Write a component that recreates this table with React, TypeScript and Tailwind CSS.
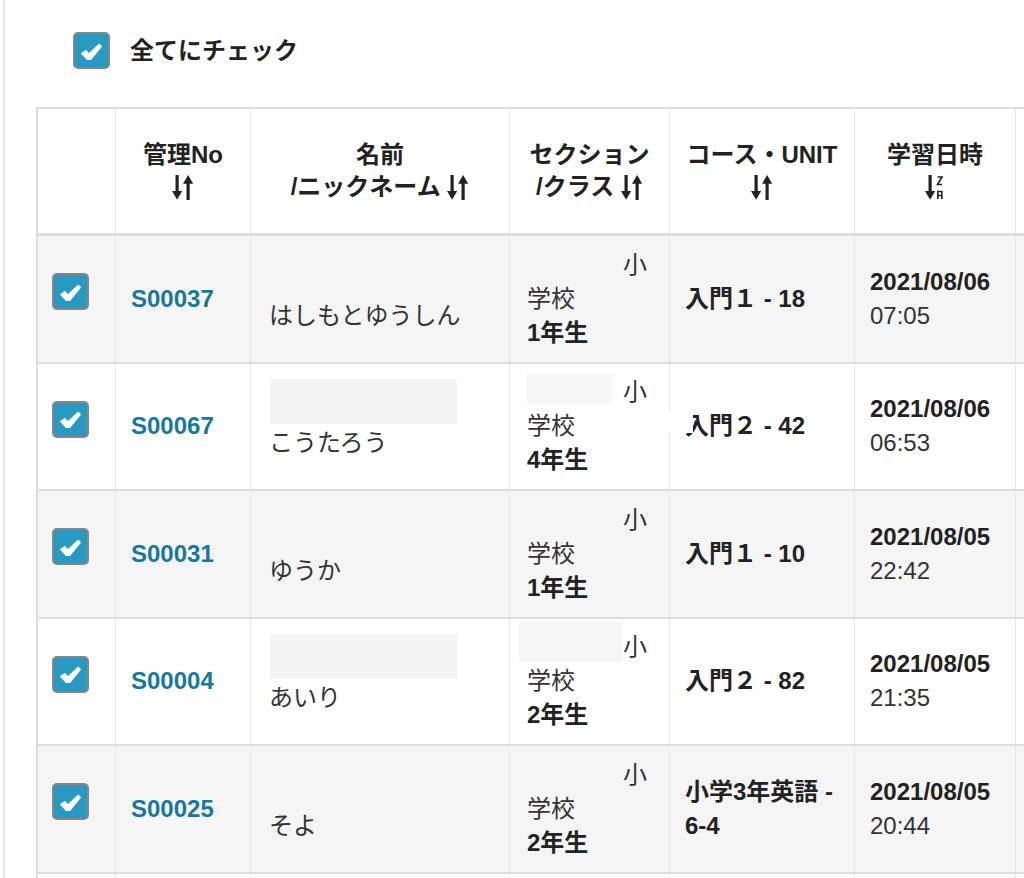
import React from 'react';

type Row = {
  id: string;
  nick: string;
  grade: string;
  course: string[];
  date: string;
  time: string;
  nameBox?: boolean;
  secBox?: 'small' | 'wide';
  smudge?: boolean;
};

const rows: Row[] = [
  { id: 'S00037', nick: 'はしもとゆうしん', grade: '1年生', course: ['入門１ - 18'], date: '2021/08/06', time: '07:05' },
  { id: 'S00067', nick: 'こうたろう', grade: '4年生', course: ['入門２ - 42'], date: '2021/08/06', time: '06:53', nameBox: true, secBox: 'small', smudge: true },
  { id: 'S00031', nick: 'ゆうか', grade: '1年生', course: ['入門１ - 10'], date: '2021/08/05', time: '22:42' },
  { id: 'S00004', nick: 'あいり', grade: '2年生', course: ['入門２ - 82'], date: '2021/08/05', time: '21:35', nameBox: true, secBox: 'wide' },
  { id: 'S00025', nick: 'そよ', grade: '2年生', course: ['小学3年英語 -', '6-4'], date: '2021/08/05', time: '20:44' },
];

const cols = 'grid grid-cols-[78px_135px_259px_160px_185px_161px_200px]';

const Check = () => (
  <div className="w-[37px] h-[37px] shrink-0 rounded-[5px] bg-[#2899c0] border-2 border-[#868686] flex items-center justify-center pt-[2px]">
    <svg width="21" height="18" viewBox="0 0 20 16">
      <path
        fill="#fff"
        stroke="#fff"
        strokeWidth="1"
        strokeLinejoin="round"
        d="M0.6 9.4L4.8 6.6L7.4 9.8L17.3 0.6L19.5 2.6L9.2 15.2L5.9 15.2Z"
      />
    </svg>
  </div>
);

const SortIcon = () => (
  <svg width="22" height="25" viewBox="0 0 22 25" className="inline-block align-[-4px]" fill="#222">
    <rect x="3.5" y="0" width="3.2" height="17" />
    <polygon points="0,16 10.2,16 5.1,24.8" />
    <polygon points="11,8.8 21.2,8.8 16.1,0" />
    <rect x="14.5" y="8" width="3.2" height="17" />
  </svg>
);

const SortDescIcon = () => (
  <svg width="20" height="25" viewBox="0 0 20 25" className="inline-block" fill="#222">
    <rect x="3.5" y="0" width="3.2" height="17" />
    <polygon points="0,16 10.2,16 5.1,24.8" />
    <polyline points="12.5,2 17,2 12.5,9.5 17,9.5" fill="none" stroke="#222" strokeWidth="1.6" />
    <path d="M12.8 24V16.5H16.8V24M12.8 20.5H16.8" fill="none" stroke="#222" strokeWidth="1.6" />
  </svg>
);

const Head = ({ children }: { children: React.ReactNode }) => (
  <div className="flex flex-col items-center justify-center text-center font-bold border-r border-[#e6e6e6] px-2">
    {children}
  </div>
);

const Line = ({ children }: { children: React.ReactNode }) => (
  <div className="h-8 flex items-center justify-center whitespace-nowrap">{children}</div>
);

export default function App() {
  return (
    <div
      className="h-[878px] overflow-hidden bg-white ml-[3px] border-l-2 border-[#e8e8ec] text-[24px] text-[#222]"
      style={{ fontFamily: '"Liberation Sans", "Noto Sans CJK JP", sans-serif' }}
    >
      <div className="flex items-center gap-5 pl-[68px] pt-8">
        <Check />
        <span className="font-bold">全てにチェック</span>
      </div>

      <div className="ml-[31px] mt-[38px] w-[1200px] border-l-2 border-t-2 border-[#dddddd]">
        <div className={`${cols} h-[127px] border-b-[3px] border-[#dddddd] bg-white`}>
          <div className="border-r border-[#e6e6e6]" />
          <Head>
            <Line>管理No</Line>
            <Line><SortIcon /></Line>
          </Head>
          <Head>
            <Line>名前</Line>
            <Line>/ニックネーム&nbsp;<SortIcon /></Line>
          </Head>
          <Head>
            <Line>セクション</Line>
            <Line>/クラス&nbsp;<SortIcon /></Line>
          </Head>
          <Head>
            <Line>コース・UNIT</Line>
            <Line><SortIcon /></Line>
          </Head>
          <Head>
            <Line>学習日時</Line>
            <Line><SortDescIcon /></Line>
          </Head>
          <div />
        </div>

        {rows.map((r, i) => (
          <div
            key={r.id}
            className={`${cols} relative h-[127.5px] border-b-2 border-[#dddddd] leading-[34px] ${i % 2 === 0 ? 'bg-[#f5f5f5]' : 'bg-white'}`}
          >
            <div className="border-r border-[#e6e6e6] pl-[14px] pt-[37px]">
              <Check />
            </div>
            <div className="border-r border-[#e6e6e6] flex items-center pl-[15px]">
              <span className="font-bold text-[#19789a]">{r.id}</span>
            </div>
            <div className="border-r border-[#e6e6e6] flex flex-col justify-center pl-[18px] text-[#333]">
              <div className="relative h-[34px]">
                {r.nameBox && <div className="absolute left-[1px] top-[-13px] w-[187px] h-[45px] bg-[#f4f4f4]" />}
              </div>
              <div>{r.nick}</div>
            </div>
            <div className="border-r border-[#e6e6e6] flex flex-col justify-center pl-[17px] pr-2">
              <div className="relative h-[34px] text-[#333]">
                {r.secBox === 'small' && <div className="absolute left-0 top-[-1px] w-[85px] h-[30px] bg-[#f6f6f6]" />}
                {r.secBox === 'wide' && <div className="absolute left-[-8px] top-[-8px] w-[103px] h-[40px] bg-[#f5f5f5]" />}
                <span className="inline-block w-[96px]" />
                <span className="relative">小</span>
              </div>
              <div className="text-[#333]">学校</div>
              <div className="font-bold">{r.grade}</div>
            </div>
            <div className="border-r border-[#e6e6e6] flex flex-col justify-center pl-[15px] font-bold">
              {r.course.map((c) => (
                <div key={c}>{c}</div>
              ))}
            </div>
            <div className="border-r border-[#e6e6e6] flex flex-col justify-center pl-[15px]">
              <div className="font-bold">{r.date}</div>
              <div className="text-[#333]">{r.time}</div>
            </div>
            <div />
            {r.smudge && <div className="absolute left-[591px] top-[48px] w-[64px] h-[21px] bg-white" />}
          </div>
        ))}

        <div className={`${cols} h-[60px] bg-white`}>
          <div className="border-r border-[#e6e6e6]" />
          <div className="border-r border-[#e6e6e6]" />
          <div className="border-r border-[#e6e6e6]" />
          <div className="border-r border-[#e6e6e6]" />
          <div className="border-r border-[#e6e6e6]" />
          <div className="border-r border-[#e6e6e6]" />
          <div />
        </div>
      </div>
    </div>
  );
}
